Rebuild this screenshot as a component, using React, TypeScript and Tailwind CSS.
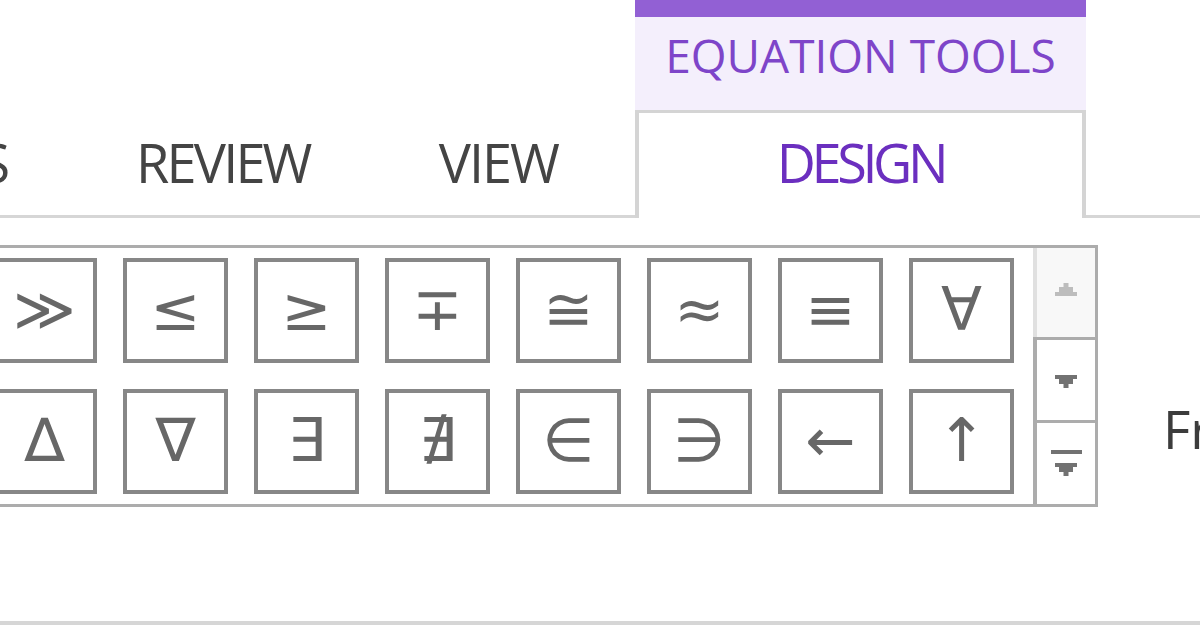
const row1 = ["≫", "≤", "≥", "∓", "≅", "≈", "≡", "∀"];
const row2 = ["∆", "∇", "∃", "∄", "∈", "∋", "←", "↑"];

function SymbolButton({ sym }: { sym: string }) {
  return (
    <div className="flex h-[105px] w-[105px] items-center justify-center border-[4px] border-[#878787] bg-white pb-[4px] font-['DejaVu_Sans',sans-serif] text-[60px] leading-none text-[#676767]">
      {sym}
    </div>
  );
}

function StepArrow({ up, color }: { up?: boolean; color: string }) {
  // stepped triangle like the pixel glyphs on the gallery scroller
  return (
    <svg width="22" height="13" viewBox="0 0 22 13" className={up ? "rotate-180" : ""}>
      <rect x="0" y="0" width="22" height="4" fill={color} />
      <rect x="4" y="4" width="14" height="5" fill={color} />
      <rect x="8.5" y="9" width="5" height="4" fill={color} />
    </svg>
  );
}

export default function App() {
  return (
    <div className="h-[630px] w-[1200px] overflow-hidden bg-white font-['Open_Sans',sans-serif] text-[#444]">
      {/* tab strip */}
      <div className="flex h-[218px]">
        <div className="flex w-[635px] items-start border-b-[3px] border-[#d6d6d6] pt-[135px] text-[54px] leading-none">
          <span className="flex w-[10px] justify-end">S</span>
          <span className="ml-[126px] tracking-[-2.8px]">REVIEW</span>
          <span className="ml-[129px] tracking-[-2px]">VIEW</span>
        </div>
        <div className="flex w-[451px] flex-col">
          <div className="h-[17px] bg-[#9260d4]" />
          <div className="flex h-[93px] justify-center bg-[#f4effc] pt-[15px] text-[46px] leading-none text-[#7e45c9]">
            EQUATION TOOLS
          </div>
          <div className="flex flex-1 justify-center border-x-[4px] border-t-[3px] border-[#d4d4d4] pt-[22px] text-[54px] leading-none tracking-[-4.4px] text-[#6b2fbf]">
            DESIGN
          </div>
        </div>
        <div className="flex-1 border-b-[3px] border-[#d6d6d6]" />
      </div>

      {/* ribbon body */}
      <div className="flex h-[407px] border-b-[4px] border-[#d6d6d6]">
        <div className="ml-[-29px] mt-[27px] flex h-[262px] border-[3px] border-[#acacac]">
          <div className="flex flex-col gap-[26px] pl-[18px] pr-[19px] pt-[10px]">
            <div className="flex gap-[26px]">
              {row1.map((s) => (
                <SymbolButton key={s} sym={s} />
              ))}
            </div>
            <div className="flex gap-[26px]">
              {row2.map((s) => (
                <SymbolButton key={s} sym={s} />
              ))}
            </div>
          </div>
          <div className="flex w-[62px] flex-col">
            <div className="flex h-[89px] items-start justify-center border-l-[4px] border-[#e0e0e0] bg-[#f8f8f8] pt-[35px]">
              <StepArrow up color="#bdbdbd" />
            </div>
            <div className="flex h-[83px] items-start justify-center border-l-[4px] border-t-[3px] border-[#acacac] pt-[35px]">
              <StepArrow color="#727272" />
            </div>
            <div className="flex flex-1 flex-col items-center border-l-[4px] border-t-[3px] border-[#acacac] pt-[27px]">
              <div className="h-[4px] w-[31px] bg-[#727272]" />
              <div className="mt-[9px]">
                <StepArrow color="#727272" />
              </div>
            </div>
          </div>
        </div>
        <div className="ml-[32px] mt-[19px] h-[366px] w-[3px] bg-[#e1e1e1]" />
        <div className="ml-[33px] whitespace-nowrap pt-[184px] text-[53px] leading-none text-[#3c3c3c]">
          Fraction
        </div>
      </div>
    </div>
  );
}
